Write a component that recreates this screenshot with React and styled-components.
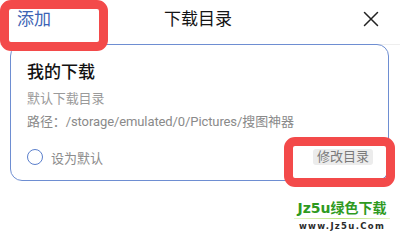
import React from "react";
import styled, { createGlobalStyle } from "styled-components";

const Global = createGlobalStyle`
  html, body { margin: 0; padding: 0; background: #fff; }
  body { font-family: Roboto, "Noto Sans CJK SC", sans-serif; }
  * { box-sizing: border-box; }
`;

const Screen = styled.div`
  position: relative;
  width: 400px;
  height: 240px;
  overflow: hidden;
  background: #fff;
`;

const Header = styled.div`
  height: 45px;
  display: grid;
  grid-template-columns: 1fr auto 1fr;
  align-items: center;
  padding: 0 21px 0 17px;
  border-bottom: 1px solid #eeeeee;
`;

const AddLink = styled.span`
  font-size: 17px;
  line-height: 22px;
  color: #3c63b5;
  justify-self: start;
  margin-top: -7px;
`;

const Title = styled.span`
  font-size: 17px;
  line-height: 22px;
  color: #151515;
  margin-top: -7px;
`;

const CloseBtn = styled.span`
  justify-self: end;
  display: flex;
  margin-top: -6px;
`;

const Card = styled.div`
  margin: 0 11px 0 10px;
  border: 1.5px solid #6e8ed2;
  border-radius: 12px;
  padding: 16px 15px 14px 16px;
  position: relative;
  top: -1px;
`;

const CardTitle = styled.div`
  font-size: 17px;
  line-height: 22px;
  font-weight: 500;
  color: #121212;
`;

const Meta = styled.div`
  font-size: 13px;
  line-height: 17px;
  letter-spacing: -0.1px;
  color: ${(p) => (p.$dark ? "#8a8a8a" : "#9a9a9a")};
  margin-top: ${(p) => p.$gap}px;
  white-space: nowrap;
`;

const Footer = styled.div`
  display: flex;
  align-items: center;
  justify-content: space-between;
  margin-top: 18px;
  height: 18px;
`;

const RadioLabel = styled.label`
  display: flex;
  align-items: center;
  gap: 8px;
  font-size: 13px;
  color: #8c8c8c;
`;

const Radio = styled.span`
  width: 16px;
  height: 16px;
  border-radius: 50%;
  border: 1.5px solid #5b7fcc;
`;

const EditButton = styled.span`
  font-size: 13px;
  line-height: 16px;
  padding: 0 4px;
  background: #ececec;
  color: #7a7a7a;
  border-radius: 3px;
`;

const Highlight = styled.div`
  position: absolute;
  left: ${(p) => p.$x}px;
  top: ${(p) => p.$y}px;
  width: ${(p) => p.$w}px;
  height: ${(p) => p.$h}px;
  border: 9px solid #f34a4a;
  border-radius: 11px;
  pointer-events: none;
`;

const Watermark = styled.div`
  position: absolute;
  left: 294px;
  top: 200px;
  display: flex;
  flex-direction: column;
  align-items: center;
`;

const MarkName = styled.div`
  font-family: "DejaVu Sans", "Noto Sans CJK SC", sans-serif;
  font-size: 14px;
  line-height: 17px;
  font-weight: 700;
  color: #2e9a1e;
  white-space: nowrap;
`;

const MarkLine = styled.div`
  width: 96px;
  height: 1px;
  background: linear-gradient(90deg, #e6f5c8, #b8e27a, #e6f5c8);
  margin-top: 1px;
`;

const MarkUrl = styled.div`
  font-family: "DejaVu Sans", sans-serif;
  font-size: 8.5px;
  line-height: 11px;
  font-weight: 700;
  letter-spacing: 1.3px;
  color: #2a2a2a;
  margin-top: 2px;
  white-space: nowrap;
`;

export default function App() {
  return (
    <Screen>
      <Global />
      <Header>
        <AddLink>添加</AddLink>
        <Title>下载目录</Title>
        <CloseBtn>
          <svg width="16" height="16" viewBox="0 0 16 16">
            <path d="M1.5 1.5 L14.5 14.5 M14.5 1.5 L1.5 14.5" stroke="#222" strokeWidth="1.5" strokeLinecap="round" />
          </svg>
        </CloseBtn>
      </Header>
      <Card>
        <CardTitle>我的下载</CardTitle>
        <Meta $gap={7}>默认下载目录</Meta>
        <Meta $gap={6} $dark>路径：/storage/emulated/0/Pictures/搜图神器</Meta>
        <Footer>
          <RadioLabel>
            <Radio />
            设为默认
          </RadioLabel>
          <EditButton>修改目录</EditButton>
        </Footer>
      </Card>
      <Highlight $x={0} $y={0} $w={108} $h={51} />
      <Highlight $x={284} $y={137} $w={111} $h={50} />
      <Watermark>
        <MarkName>Jz5u绿色下载</MarkName>
        <MarkLine />
        <MarkUrl>www.Jz5u.Com</MarkUrl>
      </Watermark>
    </Screen>
  );
}
